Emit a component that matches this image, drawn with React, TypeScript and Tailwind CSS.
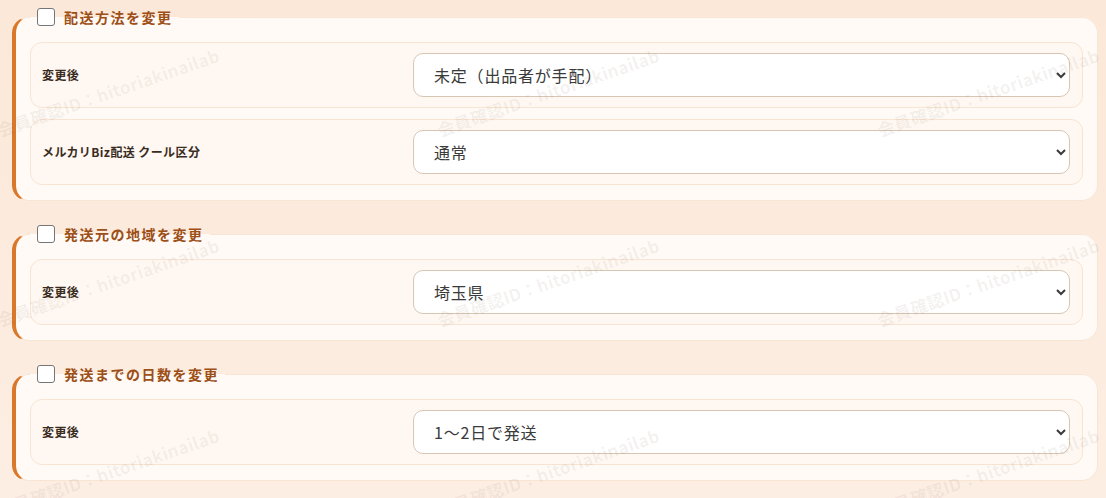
import React from "react";

const JP = "font-['Noto_Sans_CJK_JP','Noto_Sans',sans-serif]";

type Row = { label: string; value: string; options: string[] };
type Section = { title: string; rows: Row[] };

const sections: Section[] = [
  {
    title: "配送方法を変更",
    rows: [
      { label: "変更後", value: "未定（出品者が手配）", options: ["未定（出品者が手配）", "らくらくメルカリ便", "ゆうゆうメルカリ便"] },
      { label: "メルカリBiz配送 クール区分", value: "通常", options: ["通常", "冷蔵", "冷凍"] },
    ],
  },
  {
    title: "発送元の地域を変更",
    rows: [{ label: "変更後", value: "埼玉県", options: ["埼玉県", "東京都", "千葉県"] }],
  },
  {
    title: "発送までの日数を変更",
    rows: [{ label: "変更後", value: "1〜2日で発送", options: ["1〜2日で発送", "2〜3日で発送", "4〜7日で発送"] }],
  },
];

function Field({ row }: { row: Row }) {
  return (
    <div className="flex items-center gap-[11px] rounded-xl border border-[#f8e4d2] bg-[#fff8f2] py-[10px] pl-[11px] pr-[12px]">
      <div className={`w-[360px] shrink-0 text-[12px] font-bold tracking-[0.4px] text-[#3a2c22] ${JP}`}>{row.label}</div>
      <select
        defaultValue={row.value}
        className={`h-[44px] flex-1 rounded-[10px] border border-[#d8c6b4] bg-white pl-[16px] pr-[10px] text-[16px] tracking-[0.8px] text-[#3a3a3a] outline-none ${JP}`}
      >
        {row.options.map((o) => (
          <option key={o}>{o}</option>
        ))}
      </select>
    </div>
  );
}

function Box({ s }: { s: Section }) {
  return (
    <fieldset className="rounded-2xl border border-l-4 border-[#f8e5d4] border-l-[#d9782a] bg-[#fffaf6] px-[14px] pb-[15px] pt-[15px]">
      <legend className="ml-0 flex h-[20px] items-center gap-[9px] pl-[7px] pr-[6px]">
        <span className="box-border h-[18px] w-[18px] rounded-[3px] border border-[#767676] bg-white" />
        <span className={`text-[14px] font-bold tracking-[1.5px] text-[#9c4f16] ${JP}`}>{s.title}</span>
      </legend>
      <div className="flex flex-col gap-[11px]">
        {s.rows.map((r, i) => (
          <Field key={i} row={r} />
        ))}
      </div>
    </fieldset>
  );
}

const marks: { x: number; y: number }[] = [];
for (const y of [122, 312, 502]) for (const x of [-5, 435, 875]) marks.push({ x, y });

export default function App() {
  return (
    <div className="relative min-h-[498px] overflow-hidden bg-gradient-to-b from-[#fbe8d8] to-[#fdeee3] pl-3 pr-2 pt-[7px]">
      <div className="flex flex-col gap-[23px]">
        {sections.map((s, i) => (
          <Box key={i} s={s} />
        ))}
      </div>
      <div className="pointer-events-none absolute inset-0">
        {marks.map((m, i) => (
          <span
            key={i}
            className={`absolute origin-top-left -rotate-[19deg] whitespace-nowrap text-[17px] font-bold leading-[17px] tracking-[0.3px] text-[rgba(90,60,40,0.07)] ${JP}`}
            style={{ left: m.x, top: m.y }}
          >
            会員確認ID：hitoriakinailab
          </span>
        ))}
      </div>
    </div>
  );
}
